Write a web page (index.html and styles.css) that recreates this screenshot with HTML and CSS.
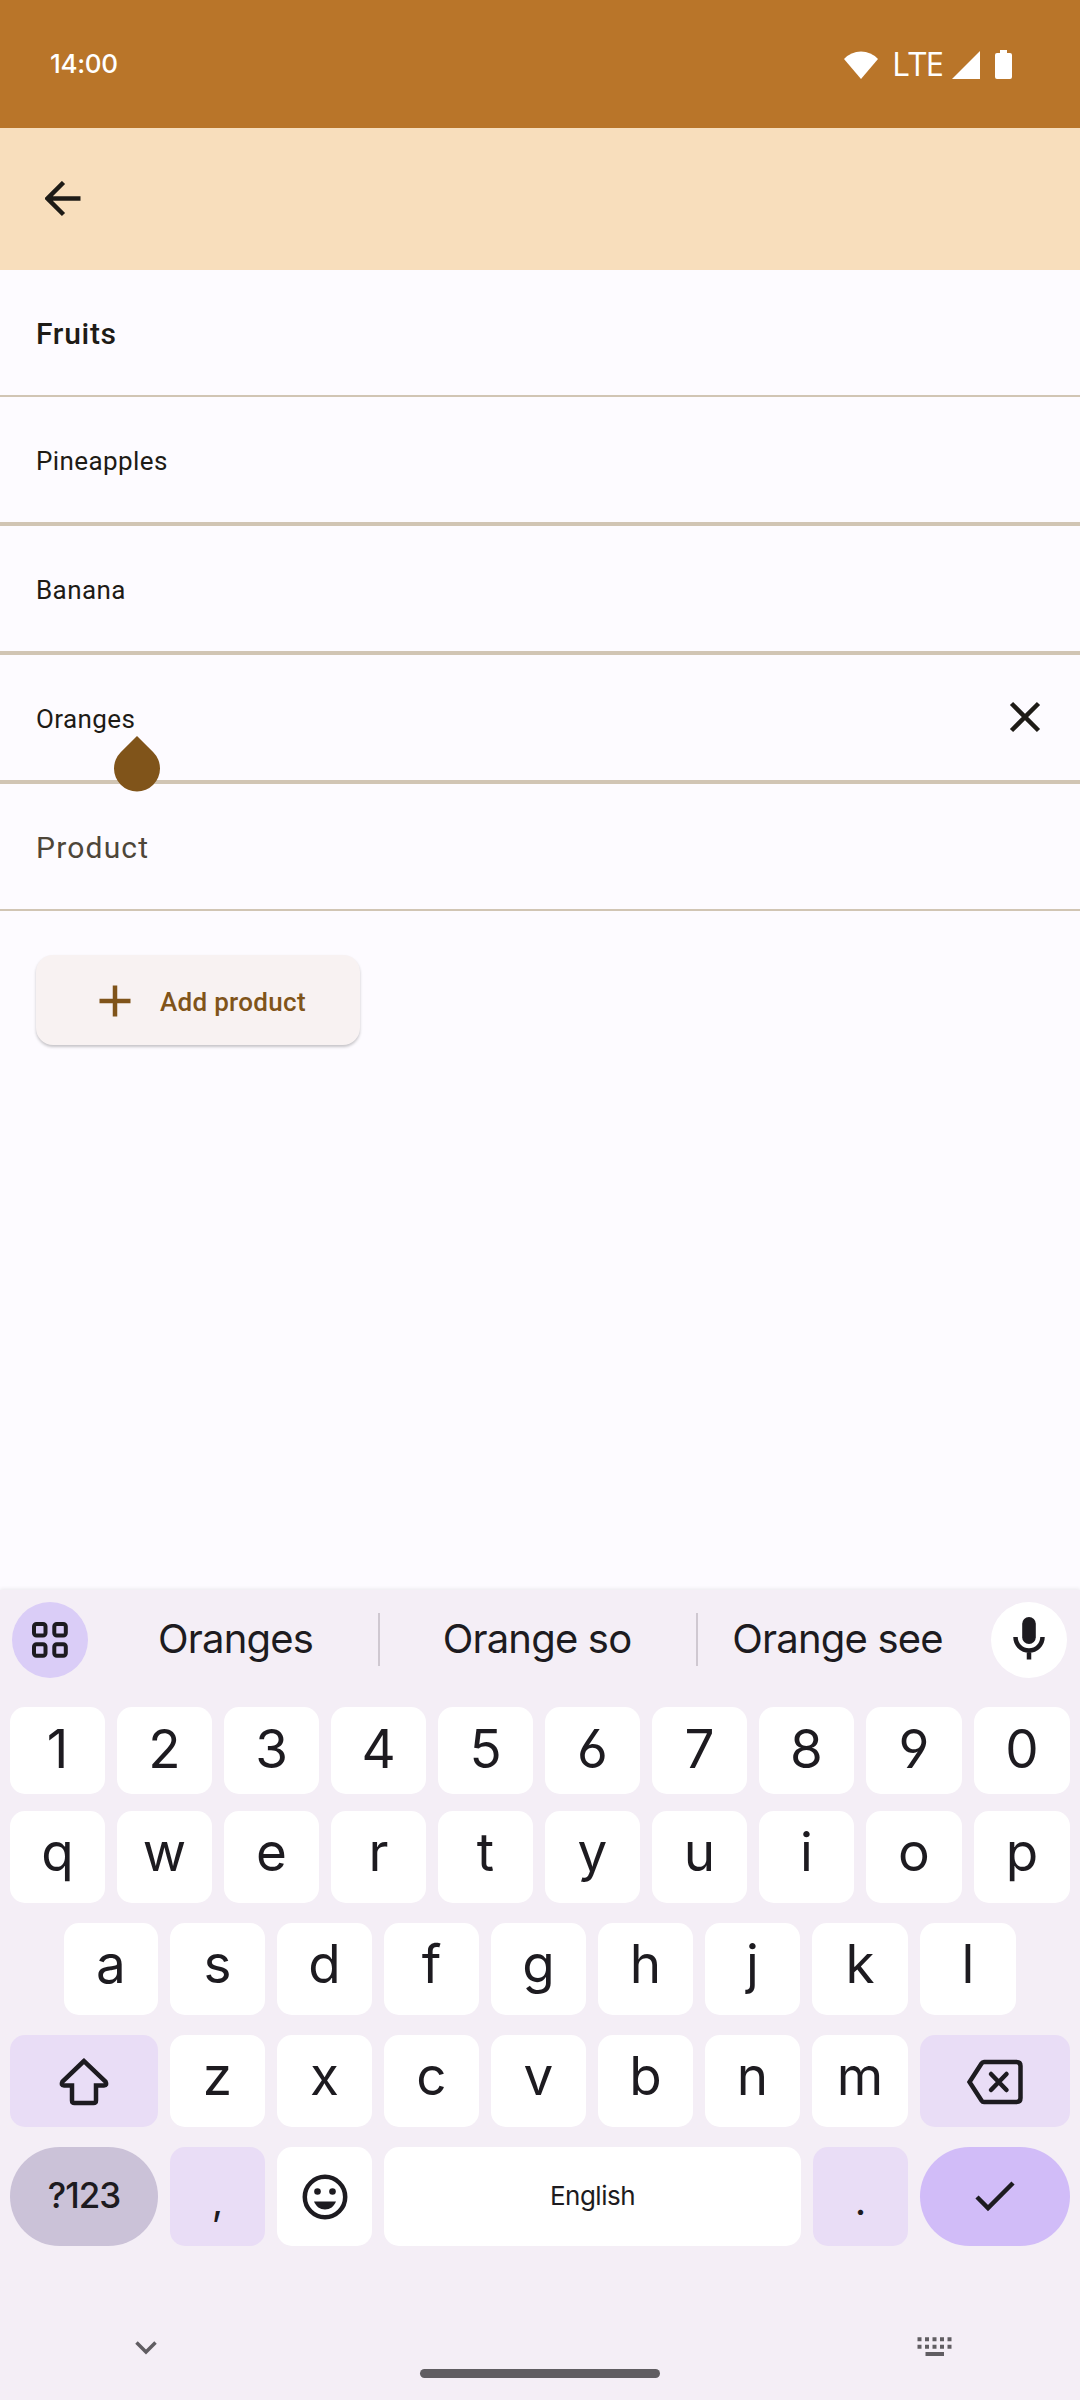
FILE: index.html
```html
<!DOCTYPE html>
<html lang="en">
<head>
<meta charset="utf-8">
<title>Fruits</title>
<link rel="stylesheet" href="styles.css">
</head>
<body>
<div class="screen">
  <header class="status">
    <span class="clock">14:00</span>
    <div class="status-icons">
      <svg class="wifi" width="34" height="28" viewBox="0 0 34 28"><path d="M0 8Q7 .5 17 .5T34 8L17 28Z"/></svg>
      <span class="lte">LTE</span>
      <svg class="signal" width="28" height="28" viewBox="0 0 28 28"><path d="M28 0V28H0Z"/></svg>
      <svg class="battery" width="17" height="29" viewBox="0 0 17 29"><path d="M5 0h7v3h3a2 2 0 0 1 2 2v22a2 2 0 0 1-2 2H2a2 2 0 0 1-2-2V5a2 2 0 0 1 2-2h3z"/></svg>
    </div>
  </header>
  <nav class="appbar">
    <svg class="back" width="36" height="36" viewBox="0 0 36 36"><path d="M35.500 17.500H3M18.500 1.500L2.500 17.500l16 16"/></svg>
  </nav>
  <main class="list">
    <div class="row title">Fruits</div>
    <div class="row item">Pineapples</div>
    <div class="row item">Banana</div>
    <div class="row item active">
      <span>Oranges</span>
      <svg class="close" width="32" height="32" viewBox="0 0 32 32"><path d="M2.500 2.500l27 27M29.500 2.500l-27 27"/></svg>
      <svg class="handle" width="46" height="56" viewBox="0 0 46 56"><path d="M23 0L39.300 16.300A23 23 0 1 1 6.700 16.300Z"/></svg>
    </div>
    <div class="row placeholder">Product</div>
    <button class="add">
      <svg width="32" height="32" viewBox="0 0 32 32"><path d="M16 .5v31M.5 16h31"/></svg>
      <span>Add product</span>
    </button>
  </main>
  <section class="keyboard">
    <div class="suggestions">
      <span class="round menu"><svg width="36" height="36" viewBox="0 0 36 36"><rect x="2" y="2" width="11.500" height="11.500" rx="2.500"/><rect x="22.300" y="2" width="11.500" height="11.500" rx="2.500"/><rect x="2" y="22.300" width="11.500" height="11.500" rx="2.500"/><rect x="22.300" y="22.300" width="11.500" height="11.500" rx="2.500"/></svg></span>
      <span class="word first">Oranges</span>
      <span class="word second">Orange so</span>
      <span class="word third">Orange see</span>
      <span class="round mic"><svg width="32" height="44" viewBox="0 0 32 44"><rect x="9.200" y="0" width="13.600" height="27" rx="6.800"/><path d="M2.500 20a13.500 13.500 0 0 0 27 0M16 34v8.500"/></svg></span>
    </div>
    <div class="keys numbers"><span>1</span><span>2</span><span>3</span><span>4</span><span>5</span><span>6</span><span>7</span><span>8</span><span>9</span><span>0</span></div>
    <div class="keys"><span>q</span><span>w</span><span>e</span><span>r</span><span>t</span><span>y</span><span>u</span><span>i</span><span>o</span><span>p</span></div>
    <div class="keys home"><span>a</span><span>s</span><span>d</span><span>f</span><span>g</span><span>h</span><span>j</span><span>k</span><span>l</span></div>
    <div class="keys lower">
      <span class="tint"><svg width="50" height="50" viewBox="0 0 50 50"><path d="M25 4L3.500 24.500Q1.500 28.500 5 28.500H13V43.500Q13 46 15.500 46H34.500Q37 46 37 43.500V28.500H45Q48.500 28.500 46.500 24.500Z"/></svg></span>
      <span>z</span><span>x</span><span>c</span><span>v</span><span>b</span><span>n</span><span>m</span>
      <span class="tint"><svg class="delete" width="56" height="46" viewBox="0 0 56 46"><path d="M17 3H49.500Q53.500 3 53.500 7V39Q53.500 43 49.500 43H17Q15.500 43 14.500 41.500L2.500 23L14.500 4.500Q15.500 3 17 3Z"/><path class="cross" stroke-linecap="round" d="M24 15l15.500 16M39.500 15l-15.500 16"/></svg></span>
    </div>
    <div class="keys bottom">
      <span class="symbols">?123</span>
      <span class="tint punct">,</span>
      <span><svg width="46" height="46" viewBox="0 0 46 46"><circle cx="23" cy="23" r="20.200"/><g class="solid"><circle cx="15.500" cy="17.500" r="3.300"/><circle cx="30.500" cy="17.500" r="3.300"/><path d="M12 27.500H34C32 32.500 28 35.500 23 35.500S14 32.500 12 27.500Z"/></g></svg></span>
      <span class="space">English</span>
      <span class="tint punct">.</span>
      <span class="enter"><svg width="40" height="32" viewBox="0 0 40 32"><path d="M2 16l11 11L38 2"/></svg></span>
    </div>
    <footer class="navbar">
      <svg class="chevron" width="22" height="14" viewBox="0 0 22 14"><path d="M1.500 1.500L11 11L20.500 1.500"/></svg>
      <span class="pill"></span>
      <svg class="kbd" width="35" height="20" viewBox="0 0 35 20"><path d="M.5 2.300H35M.5 9.800H35" stroke-dasharray="4 3.500"/><path d="M8.500 17H27"/></svg>
    </footer>
  </section>
</div>
</body>
</html>
```
FILE: styles.css
```css
* { box-sizing: border-box; }
body { margin: 0; font-family: Roboto, sans-serif; }
.screen { width: 1080px; height: 2400px; display: flex; flex-direction: column; background: #fdfbff; color: #1e1b16; overflow: hidden; }
svg { display: block; flex: none; fill: none; }

.status { height: 128px; background: #b97529; color: #fff; display: flex; justify-content: space-between; padding: 0 68px 0 50px; font-family: Inter, sans-serif; }
.status svg { fill: #fff; }
.clock { font-size: 26px; font-weight: 500; line-height: 30px; margin-top: 49px; letter-spacing: -.3px; }
.status-icons { display: flex; align-items: flex-start; padding-top: 50px; }
.lte { font: 500 33px/38px "Open Sans", sans-serif; margin: -5px 9px 0 14px; letter-spacing: -.9px; }
.wifi, .signal { margin-top: 1px; }
.battery { margin-left: 15px; }

.appbar { height: 142px; background: #f8debc; padding: 53px 0 0 45px; }
.back { stroke: #1e1b16; stroke-width: 4.500px; }

.list { flex: 1; }
.row { display: flex; align-items: center; padding: 2px 36px 0; border-bottom: 4px solid #d1c5b4; height: 129px; font-size: 26px; letter-spacing: .4px; }
.title { height: 127px; border-bottom-width: 2px; font-size: 30px; font-weight: 500; letter-spacing: .7px; }
.placeholder { height: 127px; border-bottom-width: 2px; font-size: 30px; letter-spacing: 1.200px; color: #4e4639; }
.active { position: relative; justify-content: space-between; }
.close { stroke: #1e1b16; stroke-width: 4.500px; margin: -3px 3px 0 0; }
.handle { position: absolute; left: 114px; top: 81px; fill: #80541a; z-index: 1; }
.add { display: flex; align-items: center; gap: 29px; margin: 44px 0 0 36px; width: 324px; height: 90px; padding: 1px 0 0 63px; border: 0; border-radius: 17px; background: #f8f2f2; color: #80541a; font: 500 26px Roboto, sans-serif; letter-spacing: .3px; box-shadow: 0 2px 3px rgba(0,0,0,.22); }
.add span { padding-top: 3px; }
.add svg { stroke: currentColor; stroke-width: 4.500px; }

.keyboard { height: 810px; background: #f4eef6; color: #1d1b20; font-family: Inter, sans-serif; box-shadow: 0 -1px 4px rgba(0,0,0,.08); padding: 12px 10px 0; }
.keyboard svg { stroke: #1d1b20; stroke-width: 4.500px; }
.suggestions { display: flex; align-items: center; height: 76px; margin: 0 3px 29px 2px; }
.round { width: 76px; height: 76px; border-radius: 50%; display: flex; align-items: center; justify-content: center; background: #fff; }
.menu { background: #dacdf7; }
.keyboard .menu svg { stroke-width: 4px; }
.mic svg { margin-top: -2px; }
.mic rect, .solid { fill: #1d1b20; stroke: none; }
.word { text-align: center; font-size: 40px; line-height: 51px; height: 53px; letter-spacing: -.8px; border-right: 2px solid #cfc8d1; margin-top: -2px; }
.first { width: 292px; padding-left: 5px; }
.second { width: 318px; padding-right: 2px; }
.third { width: 293px; border-color: transparent; padding-right: 12px; }
.keys { display: grid; grid-template-columns: repeat(8, 95px) 96px 1fr; gap: 12px; height: 92px; margin-bottom: 20px; }
.keys span { display: flex; align-items: center; justify-content: center; background: #fff; border-radius: 15px; font-size: 53px; line-height: 60px; padding-bottom: 10px; }
.keys span:has(svg) { padding: 0; }
.numbers { height: 87px; margin-bottom: 17px; font-feature-settings: "cv03", "cv04"; }
.numbers span { padding-bottom: 4px; }
.home { padding: 0 54px; grid-template-columns: 94px repeat(6, 95px) 96px 1fr; }
.lower { grid-template-columns: 148px repeat(6, 95px) 96px 150px; }
.lower .tint:has(svg) { padding-top: 2px; }
.bottom { grid-template-columns: 148px 95px 95px 417px 95px 150px; height: 99px; margin-bottom: 0; }
.keys .tint { background: #e9ddf6; }
.keys .symbols { background: #cbc2d8; border-radius: 50px; font-size: 35px; font-weight: 500; letter-spacing: -1px; padding-bottom: 3px; }
.keys .space { font-size: 26px; padding: 0 0 2px; letter-spacing: -.5px; }
.keys .punct { font-size: 40px; padding: 8px 0 0; }
.keys .enter { background: #d1bcf8; border-radius: 50px; }
.navbar { display: flex; align-items: flex-start; padding: 94px 0 0 125px; }
.keyboard .navbar svg { stroke: #605d62; stroke-width: 4px; }
.keyboard .navbar .chevron { stroke-width: 3.500px; }
.chevron { margin-top: 1px; }
.pill { width: 240px; height: 9px; border-radius: 5px; background: #605d62; margin: 29px 257px 0 263px; }
.kbd { margin-top: -3px; }
```
